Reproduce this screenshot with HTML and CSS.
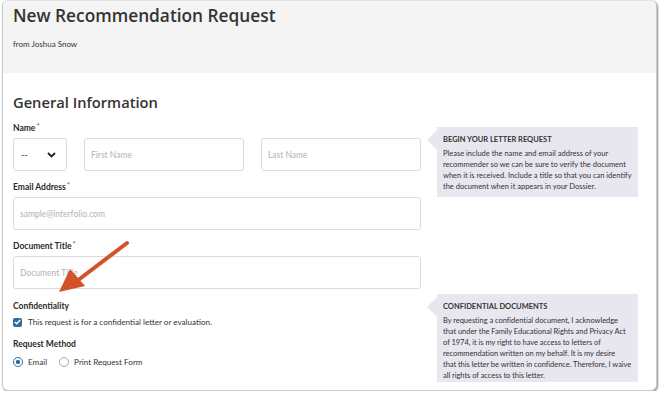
FILE: index.html
```html
<!DOCTYPE html>
<html>
<head>
<meta charset="utf-8">
<link rel="stylesheet" href="styles.css">
</head>
<body>
<div class="frame">
  <header class="head">
    <h1 class="title">New Recommendation Request</h1>
    <div class="from">from Joshua Snow</div>
  </header>
  <main class="content">
    <h2 class="section-title">General Information</h2>
    <div class="row">
      <div class="form">
        <div class="group">
          <div class="label">Name<span class="req">*</span></div>
          <div class="name-fields">
            <div class="input select"><span>--</span>
              <svg width="9" height="6" viewBox="0 0 9 6"><path d="M1 1 L4.5 4.5 L8 1" fill="none" stroke="#222" stroke-width="1.8"/></svg>
            </div>
            <div class="input grow"><span class="ph">First Name</span></div>
            <div class="input grow"><span class="ph">Last Name</span></div>
          </div>
        </div>
        <div class="group">
          <div class="label">Email Address<span class="req">*</span></div>
          <div class="input"><span class="ph">sample@interfolio.com</span></div>
        </div>
        <div class="group">
          <div class="label">Document Title<span class="req">*</span></div>
          <div class="input"><span class="ph">Document Title</span></div>
        </div>
      </div>
      <aside class="tip tip-1">
        <div class="tip-title">BEGIN YOUR LETTER REQUEST</div>
        <p>Please include the name and email address of your recommender so we can be sure to verify the document when it is received. Include a title so that you can identify the document when it appears in your Dossier.</p>
      </aside>
    </div>
    <div class="row">
      <div class="form form-2">
        <div class="label">Confidentiality</div>
        <div class="check-row">
          <span class="checkbox"><svg width="7" height="6" viewBox="0 0 7 6"><path d="M0.8 3 L2.7 4.8 L6.2 1" fill="none" stroke="#fff" stroke-width="1.4"/></svg></span>
          <span>This request is for a confidential letter or evaluation.</span>
        </div>
        <div class="label label-2">Request Method</div>
        <div class="check-row">
          <span class="radio on"></span><span class="opt">Email</span>
          <span class="radio"></span><span>Print Request Form</span>
        </div>
      </div>
      <aside class="tip tip-2">
        <div class="tip-title">CONFIDENTIAL DOCUMENTS</div>
        <p>By requesting a confidential document, I acknowledge<br>that under the Family Educational Rights and Privacy Act<br>of 1974, it is my right to have access to letters of<br>recommendation written on my behalf. It is my desire<br>that this letter be written in confidence. Therefore, I waive<br>all rights of access to this letter.</p>
      </aside>
    </div>
  </main>
  <svg class="pointer" width="80" height="70" viewBox="0 0 80 70">
    <line x1="76" y1="4" x2="22" y2="45" stroke="#d0532a" stroke-width="4" stroke-linecap="round"/>
    <polygon points="8,53 19,30 34,47" fill="#d0532a"/>
  </svg>
</div>
</body>
</html>
```
FILE: styles.css
```css
* { box-sizing: border-box; }
html, body { margin: 0; padding: 0; background: #fff; }
body { font-family: Lato, "Open Sans", sans-serif; color: #333; }
.frame {
  position: relative;
  margin-left: 2px;
  width: 655px;
  height: 391px;
  border: 1px solid #c9c9c9;
  border-top-color: #e2e2e2;
  border-radius: 6px;
  box-shadow: 1px 1px 2px rgba(0,0,0,0.45);
  overflow: hidden;
  background: #fff;
}
.head {
  height: 72px;
  background: #f4f4f4;
  padding: 4px 10px 0;
}
.title {
  margin: 0;
  font-family: "Open Sans", Lato, sans-serif;
  font-weight: 600;
  font-size: 17.3px;
  line-height: 22px;
  color: #333;
}
.from {
  margin-top: 12px;
  font-size: 8px;
  line-height: 10px;
  color: #333;
}
.content { padding: 0 10px; }
.section-title {
  margin: 19px 0 10px;
  font-family: "Open Sans", Lato, sans-serif;
  font-weight: 600;
  font-size: 14.7px;
  line-height: 20px;
  color: #333;
}
.row { display: flex; gap: 16px; }
.form { width: 408px; }
.group { margin-bottom: 10px; }
.label {
  font-size: 8.5px;
  font-weight: 700;
  line-height: 12px;
  margin-bottom: 4px;
  color: #2a2a2a;
}
.req { color: #d9534f; margin-left: 1px; position: relative; top: -2px; font-size: 8px; }
.name-fields { display: flex; gap: 17px; }
.input {
  height: 33px;
  border: 1px solid #dcdcdc;
  border-radius: 3px;
  display: flex;
  align-items: center;
  padding: 0 6px;
  font-size: 8.5px;
  background: #fff;
}
.select { width: 54px; justify-content: space-between; padding: 0 10px 0 7px; font-size: 9px; color: #333; }
.grow { flex: 1; }
.ph { color: #b3b3b3; }
.tip {
  position: relative;
  width: 201px;
  background: #e8e7ef;
  padding: 7px 3px 6px 6px;
  font-size: 7.5px;
  line-height: 11px;
  color: #333;
  align-self: flex-start;
}
.tip::before {
  content: "";
  position: absolute;
  left: -10px;
  top: 3px;
  border-top: 10px solid transparent;
  border-bottom: 10px solid transparent;
  border-right: 10px solid #e8e7ef;
}
.tip-title { font-weight: 700; margin-bottom: 3px; }
.tip p { margin: 0; }
.tip-1 { margin-top: 5px; height: 70px; }
.tip-2 { margin-top: -5px; height: 88px; }
.tip-2 p { letter-spacing: -0.04px; white-space: nowrap; }
.form-2 { padding-top: 1px; }
.check-row {
  display: flex;
  align-items: center;
  height: 14px;
  font-size: 8.1px;
  color: #333;
  margin-top: -1px;
}
.label-2 { margin-top: 9px; margin-bottom: 6px; }
.checkbox {
  width: 9px; height: 9px;
  background: #2e6da4;
  border-radius: 2px;
  display: inline-flex; align-items: center; justify-content: center;
  margin-right: 6px;
}
.radio {
  width: 10px; height: 10px;
  border: 1px solid #aaa;
  border-radius: 50%;
  margin-right: 5px;
  display: inline-block;
}
.radio.on {
  border: 1.5px solid #2e6da4;
  background: radial-gradient(circle, #2e6da4 0 2px, #fff 2.3px);
}
.opt { margin-right: 12px; }
.pointer { position: absolute; left: 48px; top: 238px; }
```
